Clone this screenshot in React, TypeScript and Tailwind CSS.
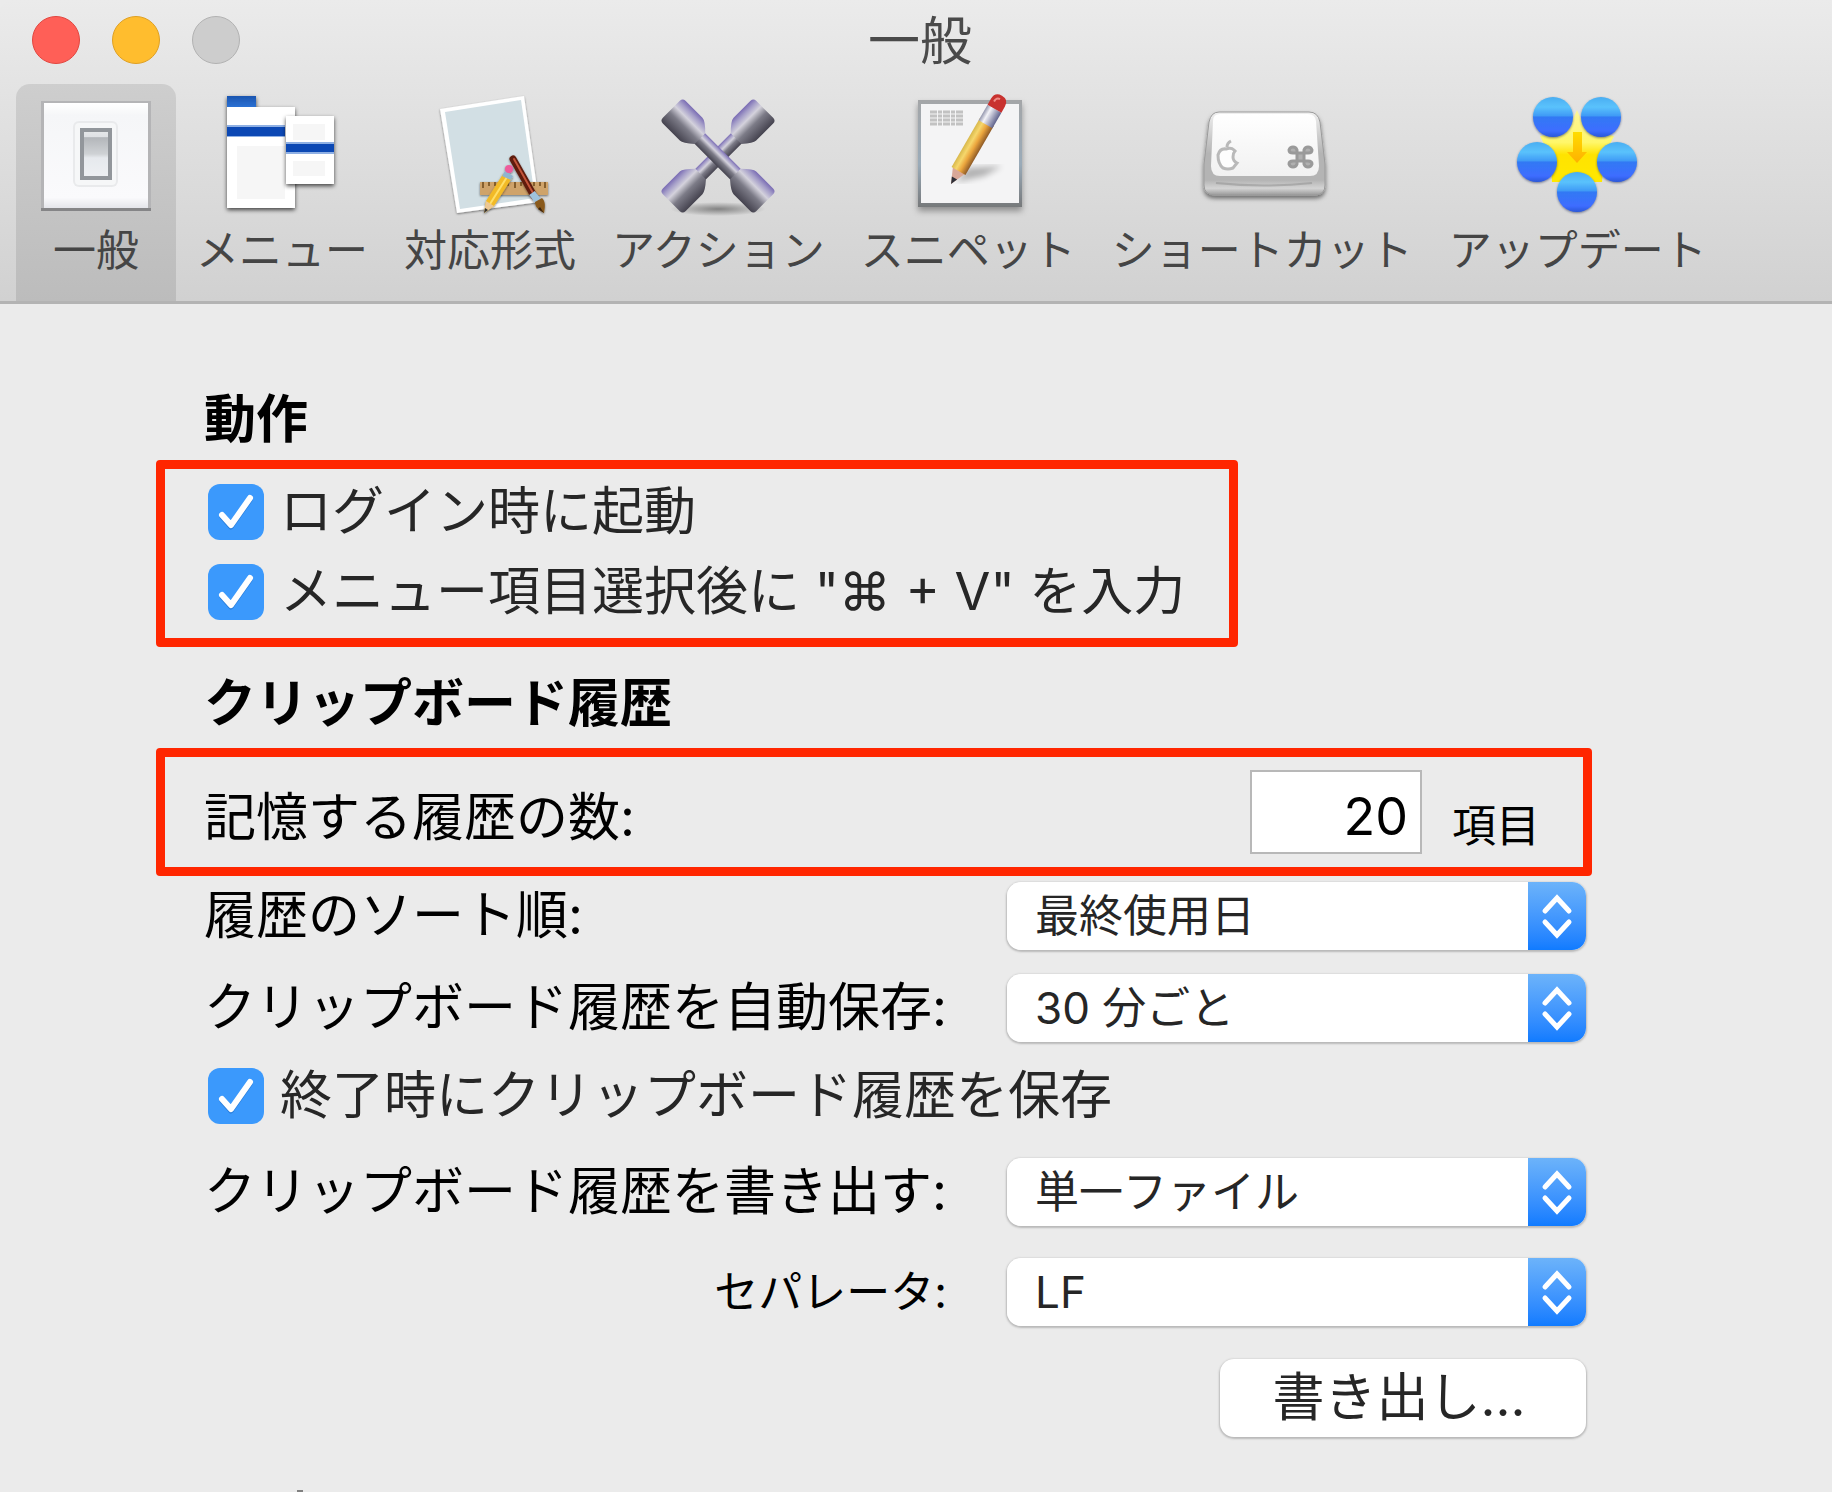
import React, { useId, useState } from "react";
import type { ReactNode } from "react";

function GeneralIcon() {
  return (
    <svg viewBox="0 0 128 128" className="size-32" aria-hidden="true">
      <defs>
        <linearGradient id="gen-plate" x1="0" y1="0" x2="0" y2="1">
          <stop offset="0" stopColor="#ffffff" />
          <stop offset="0.12" stopColor="#f5f6f8" />
          <stop offset="0.9" stopColor="#fafafc" />
          <stop offset="1" stopColor="#e4e5ea" />
        </linearGradient>
        <linearGradient id="gen-switch" x1="0" y1="0" x2="0" y2="1">
          <stop offset="0" stopColor="#e6e8ea" />
          <stop offset="0.14" stopColor="#dfe1e4" />
          <stop offset="0.16" stopColor="#b3b6ba" />
          <stop offset="0.5" stopColor="#cfd2d5" />
          <stop offset="0.58" stopColor="#e6e9ed" />
          <stop offset="1" stopColor="#eef0f3" />
        </linearGradient>
      </defs>
      <rect x="9" y="9" width="110" height="110" fill="#b4b4b6" />
      <rect x="9" y="116" width="110" height="3" fill="#858587" />
      <rect x="12" y="11" width="104" height="105" fill="url(#gen-plate)" />
      <rect x="41" y="29" width="45" height="66" rx="6" fill="#e9eaec" />
      <rect x="43" y="31" width="41" height="62" rx="4" fill="#f6f7f8" />
      <rect x="50" y="38" width="28" height="48" fill="url(#gen-switch)" stroke="#92969b" strokeWidth="4" />
    </svg>
  );
}

function MenuIcon() {
  return (
    <svg viewBox="0 0 128 128" className="size-32" aria-hidden="true">
      <defs>
        <filter id="menu-shadow" x="-20%" y="-20%" width="150%" height="150%">
          <feDropShadow dx="0" dy="2" stdDeviation="2" floodColor="#000" floodOpacity="0.7" />
        </filter>
        <linearGradient id="menu-tab" x1="0" y1="0" x2="0" y2="1">
          <stop offset="0" stopColor="#1c56b0" />
          <stop offset="1" stopColor="#2f78dd" />
        </linearGradient>
      </defs>
      <g filter="url(#menu-shadow)">
        <rect x="9" y="4" width="29" height="14" fill="url(#menu-tab)" />
        <rect x="9" y="15" width="68" height="101" fill="#ffffff" />
      </g>
      <rect x="19" y="54" width="48" height="53" fill="#f6f6f6" />
      <rect x="9" y="33" width="58" height="12" fill="#8fb0e4" />
      <rect x="9" y="35" width="58" height="9" fill="#0c48b4" />
      <rect x="68" y="24" width="48" height="68" fill="#ffffff" filter="url(#menu-shadow)" />
      <rect x="75" y="32" width="32" height="16" fill="#f6f6f6" />
      <rect x="75" y="69" width="32" height="15" fill="#f6f6f6" />
      <rect x="68" y="50" width="48" height="12" fill="#8fb0e4" />
      <rect x="68" y="52" width="48" height="8" fill="#0c48b4" />
    </svg>
  );
}

function FormatIcon() {
  return (
    <svg viewBox="0 0 128 128" className="size-32" aria-hidden="true">
      <defs>
        <filter id="fmt-shadow" x="-20%" y="-20%" width="140%" height="140%">
          <feDropShadow dx="0" dy="1" stdDeviation="1" floodColor="#000" floodOpacity="0.5" />
        </filter>
      </defs>
      <path d="M14 17 98 4l15 106-82 11Z" fill="#ffffff" filter="url(#fmt-shadow)" />
      <path d="M19 20 95 8l14 98-75 11Z" fill="#d2dfe4" />
      <g filter="url(#fmt-shadow)">
        <rect x="54" y="90" width="68" height="13" fill="#cfa36a" />
        <path d="M57 90v6M63 90v4M69 90v4M76 90v4M82 90v4M89 90v6M95 90v4M102 90v4M108 90v4M114 90v4M119 90v6" stroke="#6f4a1c" strokeWidth="1.5" />
      </g>
      <g filter="url(#fmt-shadow)">
        <path d="M87 67 108 104" stroke="#5e1b0d" strokeWidth="7" strokeLinecap="round" />
        <path d="M88 67 107 101" stroke="#c4543a" strokeWidth="2" strokeLinecap="round" />
        <path d="M106 101 112 109" stroke="#9fc3dd" strokeWidth="7" />
        <path d="M109 110l7-4c4 4 3 9 2 15-5-3-9-6-9-11Z" fill="#8a5a1d" />
        <path d="M114 115l4 6-6-4Z" fill="#3c2408" />
      </g>
      <g filter="url(#fmt-shadow)">
        <path d="M77 82 86 86 68 114 58 121 60 109Z" fill="#f2ba28" />
        <path d="M81 85 64 112" stroke="#ffdf68" strokeWidth="2" />
        <path d="M60 109 68 114 58 121Z" fill="#ecc894" />
        <path d="M59 116 62 118 58 121Z" fill="#333" />
        <path d="M79 79 87 84 85 88 76 84Z" fill="#8fb5cf" />
        <circle cx="83" cy="77" r="4" fill="#ee5b9c" />
      </g>
    </svg>
  );
}

function WrenchArm({ angle }: { angle: number }) {
  return (
    <g transform={`rotate(${angle} 64 64)`}>
      <rect x="14" y="57" width="100" height="15" fill="url(#act-metal)" />
      <path d="M-2 52q0-4 4-4h24q4 0 13 9v15q-9 8-13 8H2q-4 0-4-4Z" fill="url(#act-metal)" />
      <path d="M130 52q0-4-4-4h-24q-4 0-13 9v15q9 8 13 8h24q4 0 4-4Z" fill="url(#act-metal)" />
    </g>
  );
}

function ActionIcon() {
  return (
    <svg viewBox="0 0 128 128" className="size-32" aria-hidden="true">
      <defs>
        <linearGradient id="act-metal" x1="0" y1="0" x2="0" y2="1">
          <stop offset="0" stopColor="#7a6cb4" />
          <stop offset="0.15" stopColor="#a49dc8" />
          <stop offset="0.35" stopColor="#d4d2dc" />
          <stop offset="0.6" stopColor="#7c7b87" />
          <stop offset="1" stopColor="#45434f" />
        </linearGradient>
        <radialGradient id="act-floor">
          <stop offset="0" stopColor="#000" stopOpacity="0.4" />
          <stop offset="1" stopColor="#000" stopOpacity="0" />
        </radialGradient>
      </defs>
      <ellipse cx="64" cy="117" rx="48" ry="7" fill="url(#act-floor)" />
      <WrenchArm angle={-45} />
      <WrenchArm angle={45} />
    </svg>
  );
}

function SnippetIcon() {
  return (
    <svg viewBox="0 0 128 128" className="size-32 overflow-visible" aria-hidden="true">
      <defs>
        <filter id="snip-shadow" x="-20%" y="-20%" width="140%" height="150%">
          <feDropShadow dx="0" dy="4" stdDeviation="3" floodColor="#000" floodOpacity="0.35" />
        </filter>
        <filter id="snip-soft">
          <feGaussianBlur stdDeviation="3" />
        </filter>
        <linearGradient id="snip-edge" x1="0" y1="0" x2="0" y2="1">
          <stop offset="0" stopColor="#a4a6a8" />
          <stop offset="0.6" stopColor="#9aabb9" />
          <stop offset="1" stopColor="#77797b" />
        </linearGradient>
        <linearGradient id="snip-body" x1="0" y1="0" x2="1" y2="0">
          <stop offset="0" stopColor="#d8b84c" />
          <stop offset="0.3" stopColor="#f6d76c" />
          <stop offset="0.6" stopColor="#eba53d" />
          <stop offset="1" stopColor="#8e5a26" />
        </linearGradient>
        <linearGradient id="snip-metal" x1="0" y1="0" x2="1" y2="0">
          <stop offset="0" stopColor="#9295ac" />
          <stop offset="0.3" stopColor="#f3f3f8" />
          <stop offset="1" stopColor="#5f628c" />
        </linearGradient>
      </defs>
      <rect x="14" y="8" width="104" height="107" fill="url(#snip-edge)" filter="url(#snip-shadow)" />
      <rect x="17" y="12" width="98" height="99" fill="#f4f4f5" />
      <path d="M26 20h33M26 24h33M26 28h33M26 32h33" stroke="#c2c2c2" strokeWidth="3" strokeDasharray="7 1 4 1" />
      <path d="M52 90 64 76 98 74 80 84Z" fill="#000" opacity="0.28" filter="url(#snip-soft)" />
      <g transform="translate(47 92) rotate(30)">
        <path d="M0 0-7-16H7Z" fill="#d9a898" />
        <path d="M0 0-3-7H3Z" fill="#2f3038" />
        <rect x="-8" y="-72" width="16" height="57" fill="url(#snip-body)" />
        <rect x="-8" y="-87" width="16" height="18" fill="url(#snip-metal)" />
        <path d="M-8-87v-7q0-8 8-8t8 8v7Z" fill="#c8322f" />
        <path d="M-4-93q0-5 4-5" stroke="#ef8c86" strokeWidth="2" fill="none" />
      </g>
    </svg>
  );
}

function ShortcutIcon() {
  return (
    <svg viewBox="0 0 128 128" className="size-32 overflow-visible" aria-hidden="true">
      <defs>
        <filter id="key-shadow" x="-20%" y="-20%" width="140%" height="150%">
          <feDropShadow dx="0" dy="3" stdDeviation="2" floodColor="#000" floodOpacity="0.5" />
        </filter>
        <linearGradient id="key-side" x1="0" y1="0" x2="0" y2="1">
          <stop offset="0" stopColor="#f0f0f0" />
          <stop offset="0.5" stopColor="#b4b4b4" />
          <stop offset="0.82" stopColor="#b4b4b4" />
          <stop offset="0.92" stopColor="#d4d4d4" />
          <stop offset="1" stopColor="#9a9a9a" />
        </linearGradient>
        <linearGradient id="key-top" x1="0" y1="0" x2="0" y2="1">
          <stop offset="0" stopColor="#ffffff" />
          <stop offset="1" stopColor="#f1f1f1" />
        </linearGradient>
      </defs>
      <path d="M21 20H111q9 0 11 10l5 42v21q0 10-10 10H17Q6 103 6 93V72l5-42q2-10 10-10Z" fill="url(#key-side)" stroke="#9b9b9b" strokeWidth="1" filter="url(#key-shadow)" />
      <path d="M22 22H110q7 0 8 7l3 45q0 10-9 10H22q-9 0-9-10l2-45q0-7 7-7Z" fill="url(#key-top)" />
      <path d="M18 91q48 5 96 0" stroke="#8e8e8e" strokeWidth="2" fill="none" opacity="0.5" />
      <path d="M36 58q-3-3-8-1-6-1-8 6 0 9 5 13 5 2 10 0l4-5q-4-2-4-6 0-4 2-6ZM29 55q0-4 4-6" fill="#fdfdfd" stroke="#b9b9b9" strokeWidth="3" />
      <path d="M99 61h7v8h-7ZM99 61v-3q-1-3-4-3t-4 3q0 3 4 3ZM106 61v-3q1-3 4-3t4 3q0 3-4 3ZM99 69v3q-1 3-4 3t-4-3q0-3 4-3ZM106 69v3q1 3 4 3t4-3q0-3-4-3Z" fill="#b0b0b0" stroke="#9a9a9a" strokeWidth="3" />
    </svg>
  );
}

function UpdateIcon() {
  const balls = [
    [39, 25],
    [87, 25],
    [23, 70],
    [103, 70],
    [63, 100],
  ];
  return (
    <svg viewBox="0 0 128 128" className="size-32" aria-hidden="true">
      <defs>
        <linearGradient id="upd-ball" x1="0" y1="0" x2="0" y2="1">
          <stop offset="0" stopColor="#4aaef2" />
          <stop offset="0.25" stopColor="#5ac2fc" />
          <stop offset="0.47" stopColor="#3f9bf6" />
          <stop offset="0.5" stopColor="#3279f4" />
          <stop offset="0.85" stopColor="#3d6dff" />
          <stop offset="1" stopColor="#2b58d8" />
        </linearGradient>
        <linearGradient id="upd-star" x1="0" y1="0" x2="0" y2="1">
          <stop offset="0" stopColor="#fdf59a" />
          <stop offset="0.45" stopColor="#fff76a" />
          <stop offset="0.62" stopColor="#ffe300" />
          <stop offset="1" stopColor="#ffe800" />
        </linearGradient>
        <linearGradient id="upd-arrow" x1="0" y1="0" x2="0" y2="1">
          <stop offset="0" stopColor="#ffdc00" />
          <stop offset="1" stopColor="#ffb000" />
        </linearGradient>
        <filter id="upd-shadow" x="-20%" y="-20%" width="140%" height="140%">
          <feDropShadow dx="0" dy="1" stdDeviation="1" floodColor="#26365e" floodOpacity="0.6" />
        </filter>
      </defs>
      <path d="M63 18 72 38 100 44 90 64 88 90H38L36 64 26 44 54 38Z" fill="url(#upd-star)" />
      <path d="M59 40h9v20h5L63 71 53 60h6Z" fill="url(#upd-arrow)" />
      {balls.map(([cx, cy]) => (
        <circle key={`${cx}-${cy}`} cx={cx} cy={cy} r="20" fill="url(#upd-ball)" filter="url(#upd-shadow)" />
      ))}
    </svg>
  );
}

const tabs: { label: string; icon: ReactNode }[] = [
  { label: "一般", icon: <GeneralIcon /> },
  { label: "メニュー", icon: <MenuIcon /> },
  { label: "対応形式", icon: <FormatIcon /> },
  { label: "アクション", icon: <ActionIcon /> },
  { label: "スニペット", icon: <SnippetIcon /> },
  { label: "ショートカット", icon: <ShortcutIcon /> },
  { label: "アップデート", icon: <UpdateIcon /> },
];

function CheckRow({ label }: { label: string }) {
  const id = useId();
  return (
    <div className="ml-1 flex h-14 items-center gap-4">
      <span className="relative flex size-14 shrink-0">
        <input
          id={id}
          type="checkbox"
          defaultChecked
          className="peer size-14 appearance-none rounded-xl bg-white checked:bg-[#3b99fc]"
        />
        <svg viewBox="0 0 56 56" className="pointer-events-none absolute inset-0 hidden size-14 peer-checked:block" aria-hidden="true">
          <path d="M14 33 23 43 42 16" fill="none" stroke="#2b7fdc" strokeWidth="5" strokeLinecap="round" strokeLinejoin="round" />
          <path d="M14 31 23 41 42 14" fill="none" stroke="#fff" strokeWidth="6" strokeLinecap="round" strokeLinejoin="round" />
        </svg>
      </span>
      <label htmlFor={id} className="whitespace-nowrap text-[52px] leading-14 text-[#262626]">
        {label}
      </label>
    </div>
  );
}

function Popup({ id, options }: { id: string; options: string[] }) {
  return (
    <div className="relative h-[68px] w-[579px] shrink-0 overflow-hidden rounded-[14px] shadow-[0_1px_2px_1px_#b9b9b9]">
      <select id={id} className="size-full appearance-none bg-white pl-7 pr-16 text-[44px] leading-[68px] text-[#262626]">
        {options.map((o) => (
          <option key={o}>{o}</option>
        ))}
      </select>
      <span className="pointer-events-none absolute inset-y-0 right-0 w-[58px] bg-linear-to-b from-[#6cb3fa] to-[#0f7bff]">
        <svg viewBox="0 0 58 68" className="size-full" aria-hidden="true">
          <path d="M17 29 29 16 41 29M17 40 29 53 41 40" fill="none" stroke="#fff" strokeWidth="5" strokeLinecap="round" />
        </svg>
      </span>
    </div>
  );
}

function Highlight({ className }: { className: string }) {
  return <div className={`pointer-events-none absolute rounded-sm border-[9px] border-[#ff2600] ${className}`} />;
}

export default function App() {
  const [active, setActive] = useState("一般");
  const [count, setCount] = useState("20");
  return (
    <div className="flex min-h-screen flex-col overflow-hidden bg-[#ebebeb] font-[Inter,'Noto_Sans_CJK_JP',sans-serif]">
      <header className="rounded-tl-xl border-b-3 border-[#b3b3b3] bg-linear-to-b from-[#ebebeb] to-[#d1d1d1]">
        <div className="grid h-[84px] grid-cols-[1fr_auto_1fr] items-center px-8 pb-1">
          <div className="flex gap-8">
            <button aria-label="閉じる" className="size-12 rounded-full border border-[#e2463f] bg-[#ff5f57]" />
            <button aria-label="しまう" className="size-12 rounded-full border border-[#dfa023] bg-[#ffbd2e]" />
            <button aria-label="拡大" disabled className="size-12 rounded-full border border-[#b2b2b2] bg-[#cdcdcd]" />
          </div>
          <h1 className="pl-2 pt-1 text-[52px] leading-14 text-[#4a4a4a]">一般</h1>
        </div>
        <nav className="flex gap-1 px-4">
          {tabs.map((t) => (
            <button
              key={t.label}
              onClick={() => setActive(t.label)}
              aria-pressed={active === t.label}
              className={`flex min-w-40 flex-col items-center rounded-t-[14px] px-4 pb-[25px] pt-2 ${
                active === t.label ? "bg-linear-to-b from-[#cecece] to-[#bcbcbc]" : ""
              }`}
            >
              {t.icon}
              <span className="mt-1 whitespace-nowrap text-[43px] leading-[52px] text-[#454545]">{t.label}</span>
            </button>
          ))}
        </nav>
      </header>

      <main className="ml-[204px] w-full max-w-[1382px] pt-22 text-black">
        <h2 className="text-[52px] font-bold leading-14">動作</h2>
        <div className="relative mt-9 flex w-[1034px] flex-col gap-6">
          <CheckRow label="ログイン時に起動" />
          <CheckRow label={'メニュー項目選択後に "⌘ + V" を入力'} />
          <Highlight className="-bottom-[27px] -left-12 -top-6 right-0" />
        </div>

        <h2 className="mt-14 text-[52px] font-bold leading-14">クリップボード履歴</h2>
        <div className="relative mt-[38px] flex h-[84px] items-end">
          <label htmlFor="count" className="flex-1 pb-2 text-[52px] leading-14">
            記憶する履歴の数:
          </label>
          <input
            id="count"
            value={count}
            onChange={(e) => setCount(e.target.value)}
            className="h-[84px] w-[172px] border-2 border-[#b8b8b8] bg-white pr-3 pt-2 text-right text-[52px] leading-14"
          />
          <span className="ml-[30px] mr-[46px] text-[44px] leading-14">項目</span>
          <Highlight className="-inset-y-[22px] -left-12 -right-1.5" />
        </div>
        <div className="mt-7 flex items-center justify-between">
          <label htmlFor="sort" className="text-[52px] leading-14">
            履歴のソート順:
          </label>
          <Popup id="sort" options={["最終使用日", "作成日"]} />
        </div>
        <div className="mt-6 flex items-center justify-between">
          <label htmlFor="autosave" className="text-[52px] leading-14">
            クリップボード履歴を自動保存:
          </label>
          <Popup id="autosave" options={["30 分ごと", "60 分ごと"]} />
        </div>
        <div className="mt-[26px]">
          <CheckRow label="終了時にクリップボード履歴を保存" />
        </div>
        <div className="mt-[34px] flex items-center justify-between">
          <label htmlFor="export" className="text-[52px] leading-14">
            クリップボード履歴を書き出す:
          </label>
          <Popup id="export" options={["単一ファイル", "複数ファイル"]} />
        </div>
        <div className="mt-8 flex items-center justify-end gap-[60px]">
          <label htmlFor="separator" className="text-[44px] leading-14">
            セパレータ:
          </label>
          <Popup id="separator" options={["LF", "CR", "CRLF"]} />
        </div>
        <div className="mt-[33px] flex justify-end">
          <button className="h-[78px] w-[366px] rounded-[14px] bg-white pr-2 text-[52px] leading-14 text-[#262626] shadow-[0_1px_2px_1px_#b9b9b9]">
            書き出し...
          </button>
        </div>
        <div className="ml-[93px] mt-[53px] h-0.5 w-1.5 bg-[#808080]" />
      </main>
    </div>
  );
}
